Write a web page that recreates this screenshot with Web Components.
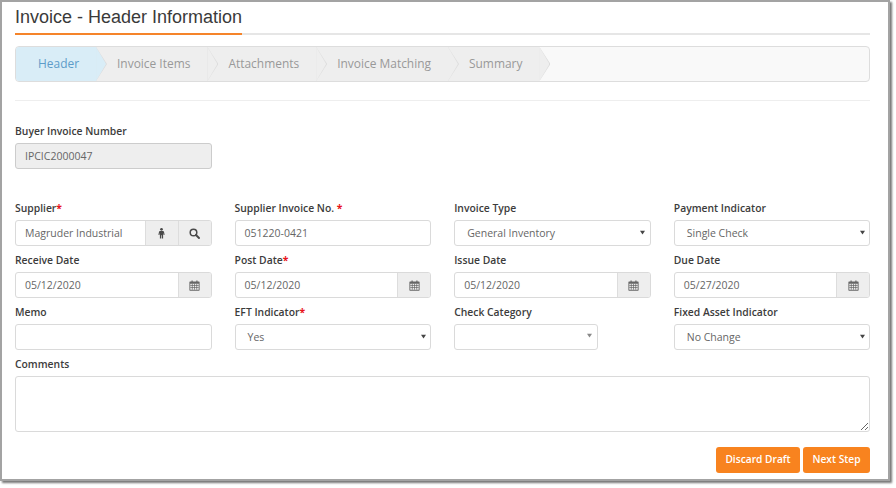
<!DOCTYPE html>
<html lang="en"><head><meta charset="utf-8"><title>Invoice</title>
<style>
html,body{margin:0;padding:0;background:#fff;font-family:"Open Sans","Liberation Sans",sans-serif}
body{min-height:488px}
</style></head><body>
<invoice-window>
  <page-title>Invoice - Header Information</page-title>
  <wizard-bar>
    <wizard-step active>Header</wizard-step>
    <wizard-step>Invoice Items</wizard-step>
    <wizard-step>Attachments</wizard-step>
    <wizard-step>Invoice Matching</wizard-step>
    <wizard-step>Summary</wizard-step>
  </wizard-bar>
  <section-rule></section-rule>
  <form-grid class="buyer">
    <form-field label="Buyer Invoice Number"><text-box disabled>IPCIC2000047</text-box></form-field>
  </form-grid>
  <form-grid>
    <form-field label="Supplier" star="tight"><text-box addons="person search">Magruder Industrial</text-box></form-field>
    <form-field label="Supplier Invoice No." star="space"><text-box>051220-0421</text-box></form-field>
    <form-field label="Invoice Type"><select-box>General Inventory</select-box></form-field>
    <form-field label="Payment Indicator"><select-box>Single Check</select-box></form-field>
    <form-field label="Receive Date"><text-box addons="calendar">05/12/2020</text-box></form-field>
    <form-field label="Post Date" star="tight"><text-box addons="calendar">05/12/2020</text-box></form-field>
    <form-field label="Issue Date"><text-box addons="calendar">05/12/2020</text-box></form-field>
    <form-field label="Due Date"><text-box addons="calendar">05/27/2020</text-box></form-field>
    <form-field label="Memo"><text-box></text-box></form-field>
    <form-field label="EFT Indicator" star="tight"><select-box>Yes</select-box></form-field>
    <form-field label="Check Category"><select-box narrow></select-box></form-field>
    <form-field label="Fixed Asset Indicator"><select-box>No Change</select-box></form-field>
    <form-field label="Comments" wide><comment-box></comment-box></form-field>
  </form-grid>
  <action-bar>
    <action-button>Discard Draft</action-button>
    <action-button>Next Step</action-button>
  </action-bar>
</invoice-window>
<script>
function def(name, css, html){
  customElements.define(name, class extends HTMLElement{
    constructor(){super();this.attachShadow({mode:'open'});}
    connectedCallback(){
      this.shadowRoot.innerHTML='<style>'+css+'</style>'+(typeof html==='function'?html(this):html);
    }
  });
}
const ICONS={
 person:'<svg width="7" height="11" viewBox="0 0 8 13" fill="#4a4a4a"><circle cx="4" cy="1.6" r="1.6"/><path d="M2.200 3.400h3.600c.6 0 1 .4 1.100 1l.8 3.600-1.200.2-.6-2.600v6.900H4.400V8.600h-.8v3.900H2.100V5.600l-.6 2.600-1.200-.2.8-3.600c.1-.6.5-1 1.100-1z"/></svg>',
 search:'<svg width="11" height="11" viewBox="0 0 11 11" fill="none" stroke="#4a4a4a"><circle cx="4.500" cy="4.500" r="3.300" stroke-width="1.500"/><path d="M7 7l3 3" stroke-width="1.900" stroke-linecap="round"/></svg>',
 calendar:'<svg width="11" height="11" viewBox="0 0 11 11"><path fill="#666" d="M1 1.500h1.500V.5h1.200v1h3.600v-1h1.200v1H10c.4 0 .6.2.6.6v8c0 .4-.2.6-.6.6H1c-.4 0-.6-.2-.6-.6v-8c0-.4.2-.6.6-.6z"/><path fill="#eee" d="M1.300 3.700h8.400v6H1.300z"/><path stroke="#666" stroke-width=".7" fill="none" d="M1.300 5.500h8.400M1.300 7.500h8.400M3.300 3.700v6M5.500 3.700v6M7.700 3.700v6"/></svg>'
};
def('invoice-window',
 `:host{display:block;box-sizing:border-box;width:890px;height:481px;border:2px solid #a3a3a3;background:#fff;padding:0 18px 0 13px;box-shadow:2px 2px 2px #777}`,
 '<slot></slot>');
def('page-title',
 `:host{display:block;height:31px;border-bottom:2px solid #e6e6e6}
  span{display:inline-block;height:31px;font:18px/30px "Liberation Sans",Arial,sans-serif;color:#3a3a3a;border-bottom:2px solid #f5842a}`,
 '<span><slot></slot></span>');
def('wizard-bar',
 `:host{display:flex;box-sizing:border-box;height:36px;margin-top:11px;border:1px solid #ddd;border-radius:4px;background:#f9f9f9;overflow:hidden}`,
 '<slot></slot>');
def('wizard-step',
 `:host{display:block;position:relative;box-sizing:border-box;height:34px;line-height:34px;padding:0 17px 0 21px;font-size:11.950px;color:#999;background:#eee}
  :host([active]){background:#d9edf7;color:#5d9cc9;padding-left:22px}
  :host::after{content:"";position:absolute;z-index:1;top:0;right:-11px;width:11px;height:34px;background:#dcdcdc;clip-path:polygon(0 0,100% 50%,0 100%)}
  i{position:absolute;z-index:2;top:0;right:-10px;width:10px;height:34px;background:#eee;clip-path:polygon(0 0,100% 50%,0 100%)}
  :host([active]) i{background:#d9edf7}`,
 '<slot></slot><i></i>');
def('section-rule',`:host{display:block;height:1px;background:#eee;margin-top:18px;margin-bottom:22px}`,'');
def('form-grid',
 `:host{display:grid;grid-template-columns:repeat(4,196.500px);column-gap:23.100px;row-gap:6px}
  :host(.buyer){margin-bottom:31px}`,
 '<slot></slot>');
def('form-field',
 `:host{display:block}
  :host([wide]){grid-column:1 / -1}
  label{display:block;height:20px;font-size:10.350px;line-height:16px;font-weight:560;color:#3c3c3c;white-space:nowrap}
  b{color:#e8141c;font-weight:700}`,
 f=>{const s=f.getAttribute('star');return '<label>'+f.getAttribute('label')+(s==='tight'?'<b>*</b>':s==='space'?' <b>*</b>':'')+'</label><slot></slot>';});
def('text-box',
 `:host{display:flex;box-sizing:border-box;height:26px;border:1px solid #dadada;border-radius:3px;background:#fff;color:#666;font-size:10.500px;overflow:hidden}
  :host([disabled]){background:#eee;border-color:#ccc}
  div{flex:1;min-width:0;padding:0 9px;line-height:24px;white-space:nowrap}
  span{flex:none;width:32px;display:flex;align-items:center;justify-content:center;background:#eee;border-left:1px solid #ddd}`,
 b=>'<div><slot></slot></div>'+(b.getAttribute('addons')||'').split(' ').filter(Boolean).map(n=>'<span>'+ICONS[n]+'</span>').join(''));
def('select-box',
 `:host{display:flex;align-items:center;box-sizing:border-box;height:26px;border:1px solid #dadada;border-radius:3px;background:#fff;color:#666;font-size:10.500px;padding:0 4.500px 0 12px}
  :host([narrow]){width:144px}
  :host([narrow]) svg{margin:-4px 1px 0 0}
  :host([narrow]) path{fill:#888}
  div{flex:1;line-height:24px;white-space:nowrap}
  svg{flex:none;margin-top:-1px}`,
 '<div><slot></slot></div><svg width="5" height="5" viewBox="0 0 5 5"><path fill="#444" d="M0 .8h5L2.500 4.600z"/></svg>');
def('comment-box',
 `:host{display:block;height:56px}
  textarea{display:block;box-sizing:border-box;width:100%;height:56px;margin:0;border:1px solid #dadada;border-radius:3px;background:#fff;outline:none;resize:vertical;font:11px "Open Sans",sans-serif}`,
 '<textarea aria-label="Comments"></textarea>');
def('action-bar',`:host{display:flex;justify-content:flex-end;gap:3px;margin-top:15px}`,'<slot></slot>');
def('action-button',
 `:host{display:block;box-sizing:border-box;height:25.500px;padding:0 9.500px;border-radius:3px;background:#f8831f;color:#fff;font-size:10.200px;font-weight:600;line-height:25.500px;white-space:nowrap}`,
 '<slot></slot>');
</script>
</body></html>
